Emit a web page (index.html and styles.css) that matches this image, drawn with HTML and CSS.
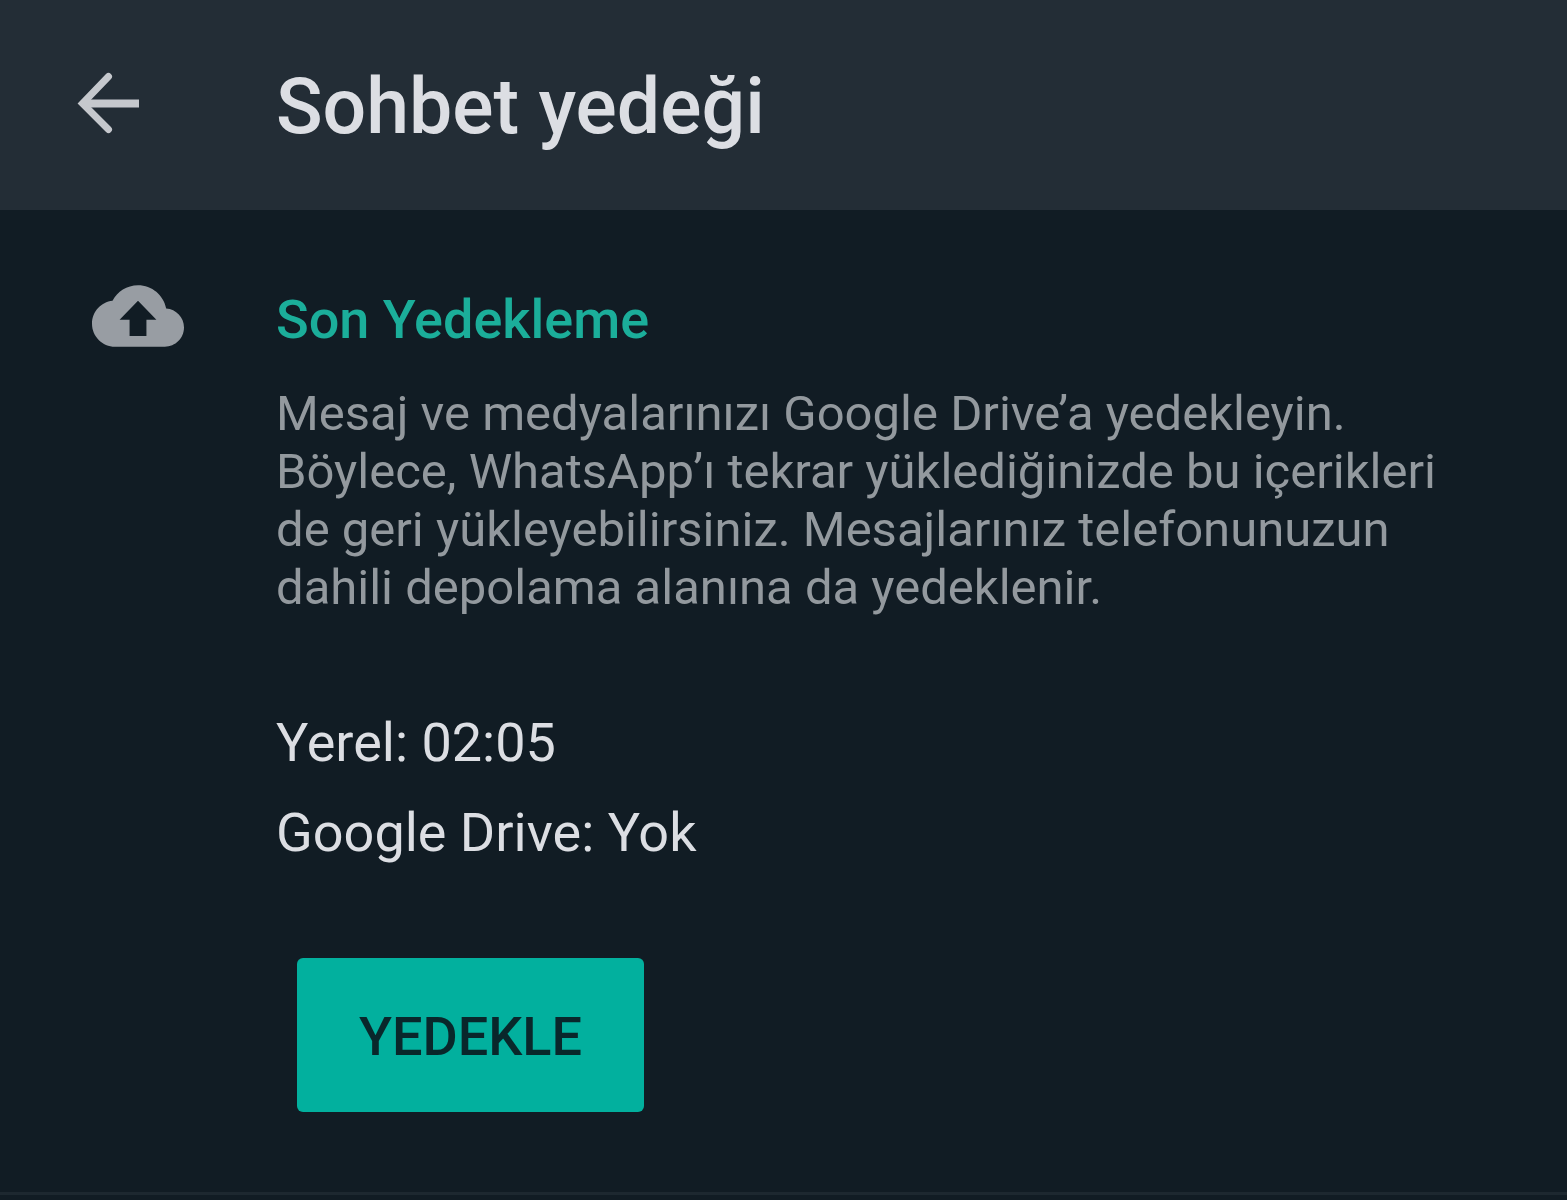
FILE: index.html
```
<!DOCTYPE html>
<html lang="tr">
<head>
  <meta charset="UTF-8">
  <meta name="viewport" content="width=device-width, initial-scale=1.0">
  <title>Sohbet yedeği</title>
  <link rel="stylesheet" href="styles.css">
</head>
<body>
  <header class="app-bar">
    <button type="button" class="back-button" aria-label="Geri">
      <svg class="icon" viewBox="0 0 92 92" aria-hidden="true">
        <path d="M20 46.500H77" fill="none" stroke="currentColor" stroke-width="8"/>
        <path d="M46.500 19.500L20.500 46.500L46.500 72.500" fill="none" stroke="currentColor" stroke-width="7" stroke-linecap="round"/>
      </svg>
    </button>
    <h1>Sohbet yedeği</h1>
  </header>

  <main class="backup-section">
    <svg class="icon cloud-icon" viewBox="0 0 24 24" aria-hidden="true">
      <path fill="currentColor" d="M19.350 10.040C18.670 6.590 15.640 4 12 4 9.110 4 6.600 5.640 5.350 8.040 2.340 8.360 0 10.910 0 14c0 3.310 2.690 6 6 6h13c2.760 0 5-2.240 5-5 0-2.640-2.050-4.780-4.650-4.960zM14.200 13v4.200h-4.400V13H7.200l4.800-5 4.800 5h-2.600z"/>
    </svg>
    <div class="backup-content">
      <h2>Son Yedekleme</h2>
      <p class="description">Mesaj ve medyalarınızı Google Drive’a yedekleyin. Böylece, WhatsApp’ı tekrar yüklediğinizde bu içerikleri de geri yükleyebilirsiniz. Mesajlarınız telefonunuzun dahili depolama alanına da yedeklenir.</p>
      <div class="backup-status">
        <p>Yerel: 02:05</p>
        <p>Google Drive: Yok</p>
      </div>
      <button type="button" class="btn-primary">YEDEKLE</button>
    </div>
  </main>
</body>
</html>
```
FILE: styles.css
```
:root {
  --bar: #232d36;
  --background: #111c24;
  --accent: #02b09e;
  --heading: #1bae9a;
  --text: #dcdee3;
  --text-light: #93999e;
  --icon: #989da3;
  --border: #1d2830;
}

* {
  margin: 0;
  padding: 0;
  box-sizing: border-box;
}

body {
  background-color: var(--background);
  color: var(--text);
  font-family: Roboto, "Noto Sans", sans-serif;
}

.icon {
  display: block;
  width: 92px;
  height: 92px;
}

/* App bar */
.app-bar {
  display: flex;
  align-items: flex-start;
  gap: 122px;
  padding: 57px 62px 53px;
  background-color: var(--bar);
}

.back-button {
  border: none;
  background: none;
  color: #c5c8cd;
  cursor: pointer;
}

h1 {
  font-size: 77px;
  font-weight: 500;
  line-height: 100px;
}

/* Last backup */
.backup-section {
  display: flex;
  align-items: flex-start;
  gap: 92px;
  padding: 60px 92px 80px;
  border-bottom: 3px solid var(--border);
}

.cloud-icon {
  flex-shrink: 0;
  color: var(--icon);
}

.backup-content {
  padding-top: 20px;
}

h2 {
  color: var(--heading);
  font-size: 54px;
  font-weight: 500;
  line-height: 60px;
}

.description {
  margin-top: 35px;
  color: var(--text-light);
  font-size: 49px;
  line-height: 58px;
}

.backup-status {
  margin: 81px 0 80px;
  font-size: 54px;
  line-height: 90px;
}

.btn-primary {
  margin-left: 21px;
  padding: 50px 62px 46px;
  border: none;
  border-radius: 6px;
  background-color: var(--accent);
  color: #09272b;
  font-family: inherit;
  font-size: 54px;
  font-weight: 500;
  line-height: 58px;
  cursor: pointer;
}
```
